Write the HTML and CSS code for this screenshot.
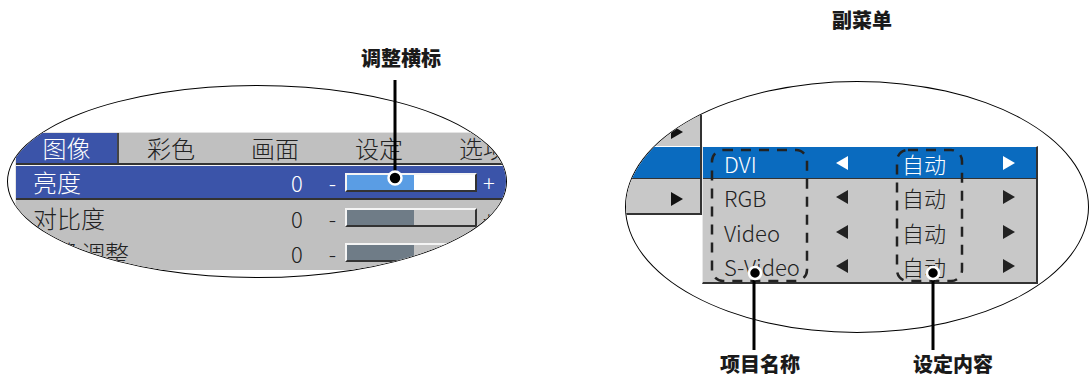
FILE: index.html
```html
<!DOCTYPE html>
<html lang="zh-CN">
<head>
    <meta charset="UTF-8">
    <title>菜单说明</title>
    <link rel="stylesheet" href="styles.css">
</head>
<body>
    <div class="stage">
        <section class="panel panel-left">
            <div class="lens lens-left">
                <div class="menu">
                    <div class="tabs">
                        <span class="tab active">图像</span>
                        <span class="tab">彩色</span>
                        <span class="tab">画面</span>
                        <span class="tab">设定</span>
                        <span class="tab">选项</span>
                    </div>
                    <div class="row sel">
                        <span class="name">亮度</span>
                        <span class="val">0</span>
                        <span class="minus">-</span>
                        <span class="bar"><span class="fill"></span></span>
                        <span class="plus">+</span>
                    </div>
                    <div class="row">
                        <span class="name">对比度</span>
                        <span class="val">0</span>
                        <span class="minus">-</span>
                        <span class="bar"><span class="fill"></span></span>
                        <span class="plus">+</span>
                    </div>
                    <div class="row">
                        <span class="name">图像调整</span>
                        <span class="val">0</span>
                        <span class="minus">-</span>
                        <span class="bar"><span class="fill"></span></span>
                        <span class="plus">+</span>
                    </div>
                </div>
            </div>

            <svg class="marks" width="560" height="380">
                <line x1="395" y1="80" x2="395" y2="174" stroke="#000" stroke-width="3"/>
                <circle cx="395" cy="178" r="6.5" fill="#000" stroke="#fff" stroke-width="2.5"/>
            </svg>
            <div class="label label-adjust">调整横标</div>
        </section>

        <section class="panel panel-right">
            <div class="lens lens-right">
                <div class="parent">
                    <div class="p-top"><span class="tri-r"></span></div>
                    <div class="p-sel"></div>
                    <div class="p-row"><span class="tri-r"></span></div>
                </div>
                <div class="submenu">
                    <div class="s-row sel">
                        <span class="s-name">DVI</span>
                        <span class="s-arrow"><span class="tri-l"></span></span>
                        <span class="s-val">自动</span>
                        <span class="s-arrow"><span class="tri-r"></span></span>
                    </div>
                    <div class="s-row">
                        <span class="s-name">RGB</span>
                        <span class="s-arrow"><span class="tri-l"></span></span>
                        <span class="s-val">自动</span>
                        <span class="s-arrow"><span class="tri-r"></span></span>
                    </div>
                    <div class="s-row">
                        <span class="s-name">Video</span>
                        <span class="s-arrow"><span class="tri-l"></span></span>
                        <span class="s-val">自动</span>
                        <span class="s-arrow"><span class="tri-r"></span></span>
                    </div>
                    <div class="s-row last">
                        <span class="s-name">S-Video</span>
                        <span class="s-arrow"><span class="tri-l"></span></span>
                        <span class="s-val">自动</span>
                        <span class="s-arrow"><span class="tri-r"></span></span>
                    </div>
                </div>
            </div>

            <svg class="marks" width="529" height="380">
                <rect x="152" y="150" width="95" height="131" rx="11" fill="none" stroke="#222" stroke-width="2.5" stroke-dasharray="10 8"/>
                <rect x="337" y="150" width="65" height="131" rx="11" fill="none" stroke="#222" stroke-width="2.5" stroke-dasharray="10 8"/>
                <line x1="194" y1="276" x2="194" y2="350" stroke="#000" stroke-width="3"/>
                <line x1="373" y1="276" x2="373" y2="350" stroke="#000" stroke-width="3"/>
                <circle cx="195" cy="273" r="6" fill="#000" stroke="#fff" stroke-width="2.5"/>
                <circle cx="373" cy="273" r="6" fill="#000" stroke="#fff" stroke-width="2.5"/>
            </svg>
            <div class="label label-sub">副菜单</div>
            <div class="label label-item">项目名称</div>
            <div class="label label-value">设定内容</div>
        </section>
    </div>
</body>
</html>
```

FILE: styles.css
```css
* {
    margin: 0;
    padding: 0;
    box-sizing: border-box;
}

body {
    width: 1089px;
    height: 380px;
    overflow: hidden;
    background-color: #ffffff;
    font-family: "Noto Sans CJK SC", "Noto Sans", sans-serif;
    color: #1a1a1a;
}

.stage {
    display: flex;
    height: 380px;
}

.panel {
    position: relative;
    height: 380px;
}

.panel-left {
    width: 560px;
    padding: 85px 0 0 7px;
}

.panel-right {
    width: 529px;
    padding: 81px 0 0 65px;
}

/* magnifier ellipse */
.lens {
    border: 1.5px solid #000;
    border-radius: 50%;
    overflow: hidden;
    background-color: #ffffff;
}

.lens-left {
    width: 500px;
    height: 193px;
}

.lens-right {
    width: 464px;
    height: 252px;
    display: flex;
    align-items: flex-start;
}

/* left: main menu */
.menu {
    width: 520px;
    margin: 46px 0 0 7px;
    background-color: #c0c0c0;
    font-weight: 300;
    font-size: 24px;
    border-left: 1px solid #e4e4e4;
}

.tabs {
    display: flex;
    height: 33px;
    border-top: 1px solid #e4e4e4;
    border-bottom: 2px solid #333;
}

.tab {
    width: 105px;
    height: 30px;
    line-height: 30px;
    text-align: center;
    color: #222;
}

.tab.active {
    width: 104px;
    background-color: #3b54a9;
    color: #fff;
    border-right: 2px solid #444;
}

.row {
    display: flex;
    align-items: center;
    height: 35px;
    padding-left: 17px;
    color: #222;
}

.row.sel {
    height: 35px;
    background-color: #3b54a9;
    color: #fff;
    border-top: 1px solid #f4f4f4;
    border-bottom: 2px solid #333;
}

.name {
    width: 252px;
    line-height: 1;
}

.val {
    width: 24px;
    text-align: center;
    font-size: 22px;
}

.minus {
    width: 36px;
    text-align: right;
    padding-right: 9px;
    font-size: 22px;
}

.plus {
    width: 12px;
    margin-left: 6px;
    text-align: center;
    font-size: 22px;
}

.bar {
    display: flex;
    width: 132px;
    height: 19px;
    border-top: 2px solid #f4f4f4;
    border-left: 2px solid #f4f4f4;
    border-bottom: 2px solid #333;
    border-right: 2px solid #333;
    background-color: #c4c4c4;
}

.fill {
    width: 67px;
    background-color: #6f7c87;
}

.sel .bar {
    background-color: #ffffff;
}

.sel .fill {
    background-color: #5a9de4;
}

/* right: parent menu and submenu */
.parent {
    width: 76px;
    flex-shrink: 0;
    background-color: #c8c8c8;
    border-right: 2px solid #333;
    border-bottom: 2px solid #333;
}

.p-top {
    height: 64px;
    display: flex;
    align-items: flex-end;
    justify-content: flex-end;
    padding: 0 17px 7px 0;
}

.p-sel {
    height: 33px;
    background-color: #0a6bbf;
    border-top: 1px solid #ffffff;
    border-bottom: 1px solid #333;
}

.p-row {
    height: 34px;
    display: flex;
    align-items: center;
    justify-content: flex-end;
    padding: 6px 17px 0 0;
}

.submenu {
    width: 336px;
    flex-shrink: 0;
    margin-top: 64px;
    background-color: #c8c8c8;
    border-top: 1px solid #ffffff;
    border-left: 1px solid #e8e8e8;
    border-right: 2px solid #333;
    border-bottom: 2px solid #333;
    font-weight: 300;
    font-size: 22px;
}

.s-row {
    display: flex;
    align-items: center;
    height: 35px;
    padding-left: 21px;
    color: #222;
}

.s-row.sel {
    height: 32px;
    background-color: #0a6bbf;
    color: #fff;
    border-bottom: 1px solid #333;
}

.s-row.last {
    height: 33px;
}

.s-name {
    width: 100px;
}

.s-val {
    width: 128px;
    text-align: center;
}

.s-arrow {
    display: flex;
    justify-content: center;
    width: 36px;
}

.s-arrow:last-child {
    width: 42px;
}

.tri-l,
.tri-r {
    width: 0;
    height: 0;
    border-top: 7px solid transparent;
    border-bottom: 7px solid transparent;
}

.tri-l {
    border-right: 12px solid currentColor;
}

.tri-r {
    border-left: 12px solid currentColor;
}

.parent .tri-r {
    color: #111;
}

/* callouts */
.marks {
    position: absolute;
    left: 0;
    top: 0;
    pointer-events: none;
}

.label {
    position: absolute;
    width: 100px;
    text-align: center;
    font-size: 20px;
    font-weight: 900;
    line-height: 22px;
    color: #1a1a1a;
}

.label-adjust {
    left: 351px;
    top: 47px;
}

.label-sub {
    left: 252px;
    top: 9px;
}

.label-item {
    left: 150px;
    top: 353px;
}

.label-value {
    left: 343px;
    top: 353px;
}
```
